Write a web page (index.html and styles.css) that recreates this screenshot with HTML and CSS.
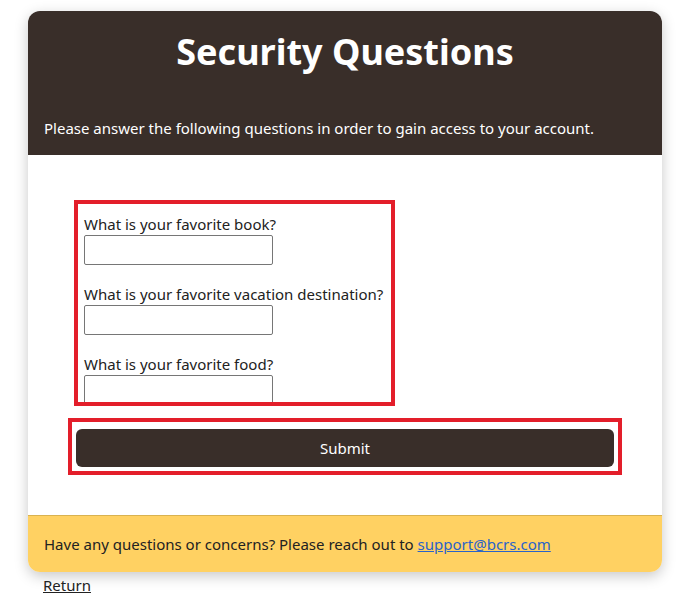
FILE: index.html
```html
<!DOCTYPE html>
<html lang="en">
<head>
<meta charset="utf-8">
<title>Security Questions</title>
<link rel="stylesheet" href="styles.css">
</head>
<body>
<main class="page">
  <section class="card">
    <header class="card-header">
      <h1 class="title">Security Questions</h1>
      <p class="subtitle">Please answer the following questions in order to gain access to your account.</p>
    </header>
    <div class="card-body">
      <form class="form">
        <div class="fields">
          <div class="field">
            <label class="label" for="q1">What is your favorite book?</label>
            <input class="input" id="q1" type="text">
          </div>
          <div class="field">
            <label class="label" for="q2">What is your favorite vacation destination?</label>
            <input class="input" id="q2" type="text">
          </div>
          <div class="field">
            <label class="label" for="q3">What is your favorite food?</label>
            <input class="input" id="q3" type="text">
          </div>
        </div>
        <div class="actions">
          <button class="submit" type="button">Submit</button>
        </div>
      </form>
    </div>
    <footer class="card-footer">
      <p class="footer-text">Have any questions or concerns? Please reach out to <a class="mail" href="#">support@bcrs.com</a></p>
    </footer>
  </section>
  <a class="return" href="#">Return</a>
</main>
</body>
</html>
```

FILE: styles.css
```css
* { box-sizing: border-box; }

html, body {
  margin: 0;
  padding: 0;
  background: #ffffff;
}

body {
  font-family: "Noto Sans", "Open Sans", sans-serif;
  color: #222222;
  font-size: 15px;
}

.page {
  padding: 11px 32px 0 28px;
}

.card {
  width: 634px;
  border-radius: 12px;
  overflow: hidden;
  box-shadow: 0 4px 14px rgba(0, 0, 0, 0.22);
  background: #ffffff;
  display: flex;
  flex-direction: column;
}

.card-header {
  background: #392e29;
  color: #ffffff;
  height: 144px;
  padding: 19px 16px 0 16px;
}

.title {
  margin: 0;
  text-align: center;
  font-size: 36px;
  line-height: 44px;
  font-weight: 700;
}

.subtitle {
  margin: 43px 0 0 0;
  font-size: 15px;
  line-height: 22px;
}

.card-body {
  padding: 45px 40px 40px 40px;
  height: 360px;
}

.form {
  display: flex;
  flex-direction: column;
}

.fields {
  margin-left: 6px;
  width: fit-content;
  height: 206px;
  overflow: hidden;
  border: 4px solid #e31e2a;
  padding: 9px 8px 0 6px;
  display: flex;
  flex-direction: column;
  gap: 18px;
}

.field {
  display: flex;
  flex-direction: column;
  align-items: flex-start;
}

.label {
  font-size: 15px;
  line-height: 22px;
  color: #222222;
}

.input {
  width: 189px;
  height: 30px;
  border: 1px solid #767676;
  border-radius: 2px;
  background: #ffffff;
  font: inherit;
}

.actions {
  margin-top: 12px;
  border: 4px solid #e31e2a;
  padding: 7px 4px 4px 4px;
}

.submit {
  display: block;
  width: 100%;
  height: 38px;
  border: none;
  border-radius: 6px;
  background: #392e29;
  color: #ffffff;
  font-family: inherit;
  font-size: 15px;
  cursor: pointer;
}

.card-footer {
  height: 57px;
  background: #ffd162;
  border-top: 1px solid #d9b250;
  padding: 0 16px;
  display: flex;
  align-items: center;
}

.footer-text {
  margin: 0;
  font-size: 15px;
  line-height: 22px;
  color: #222222;
}

.mail {
  color: #2a63c9;
  text-decoration: underline;
}

.return {
  display: inline-block;
  margin: 2px 0 0 15px;
  color: #222222;
  font-size: 15px;
  line-height: 22px;
  text-decoration: underline;
}
```
